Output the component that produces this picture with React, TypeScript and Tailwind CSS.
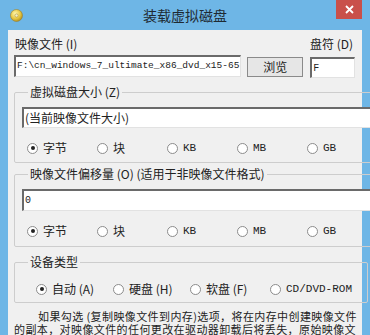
import React from "react";

const cjk = { fontFamily: '"Noto Sans CJK SC", "Noto Sans", sans-serif' };
const mono = { fontFamily: '"Liberation Mono", "DejaVu Sans Mono", monospace' };

function Radio({ checked, label, isMono }: { checked?: boolean; label: string; isMono?: boolean }) {
  return (
    <div className="flex items-center h-[14px]">
      <span className="w-[11px] h-[11px] rounded-full border border-[#8c8c8c] bg-white flex items-center justify-center shrink-0">
        {checked && <span className="w-[4px] h-[4px] rounded-full bg-[#222]" />}
      </span>
      <span
        className={"ml-[5px] whitespace-nowrap text-[#222] " + (isMono ? "text-[11px]" : "text-[12px]")}
        style={isMono ? mono : cjk}
      >
        {label}
      </span>
    </div>
  );
}

function UnitRow() {
  return (
    <div className="grid grid-cols-[70px_70px_70px_70px_70px] pl-[5px]">
      <Radio checked label="字节" />
      <Radio label="块" />
      <Radio label="KB" isMono />
      <Radio label="MB" isMono />
      <Radio label="GB" isMono />
    </div>
  );
}

function Input({ children, className }: { children?: React.ReactNode; className?: string }) {
  return (
    <div
      className={
        "bg-white border-t-2 border-l-2 border-t-[#6a6a6a] border-l-[#6a6a6a] border-b border-r border-b-[#e2e2e2] border-r-[#e2e2e2] flex items-center pl-[1px] overflow-hidden whitespace-nowrap text-[#222] " +
        (className ?? "")
      }
    >
      {children}
    </div>
  );
}

export default function App() {
  return (
    <div className="w-[370px] h-[335px] bg-[#6eb6e6] flex flex-col overflow-hidden" style={cjk}>
      {/* Title bar */}
      <div className="h-[30px] flex shrink-0">
        <div className="w-[40px] pl-[10px] pt-[9px]">
          <svg width="13" height="13" viewBox="0 0 13 13">
            <defs>
              <radialGradient id="g" cx="40%" cy="35%" r="70%">
                <stop offset="0%" stopColor="#fff8b0" />
                <stop offset="60%" stopColor="#e6c640" />
                <stop offset="100%" stopColor="#a88a20" />
              </radialGradient>
            </defs>
            <circle cx="6.5" cy="6.5" r="6" fill="url(#g)" stroke="#9a8030" strokeWidth="0.6" />
            <circle cx="6.5" cy="6.5" r="1.6" fill="#f4efc8" stroke="#a08830" strokeWidth="0.5" />
          </svg>
        </div>
        <div className="flex-1 flex items-center justify-center text-[14px] text-[#1e2a33]">装载虚拟磁盘</div>
        <div className="w-[40px] flex justify-end pr-[8px]">
          <div className="w-[26px] h-[19px] bg-[#c9504a] flex items-center justify-center">
            <svg width="9" height="9" viewBox="0 0 9 9">
              <path d="M1 1 L8 8 M8 1 L1 8" stroke="#fff" strokeWidth="1.8" />
            </svg>
          </div>
        </div>
      </div>

      {/* Body */}
      <div className="flex-1 mx-[8px] bg-[#f0f0f0] pl-[6px] pr-[7px] pt-[7px] text-[12px] text-[#222]">
        <div className="flex h-[14px] items-center leading-[14px]">
          <span className="flex-1 pl-[1px]">映像文件 (I)</span>
          <span className="w-[45px]">盘符 (D)</span>
        </div>
        <div className="flex mt-[4px] items-start">
          <Input className="w-[228px] h-[22px] text-[9.5px]">
            <span style={mono}>F:\cn_windows_7_ultimate_x86_dvd_x15-65</span>
          </Input>
          <div className="ml-[6px] mt-[2px] w-[56px] h-[20px] bg-[#e6e6e6] border border-[#8a8a8a] flex items-center justify-center text-[12px]">
            浏览
          </div>
          <Input className="ml-[7px] mt-[2px] w-[45px] h-[21px] text-[10px]">
            <span style={mono}>F</span>
          </Input>
        </div>

        {/* Group 1 */}
        <fieldset className="mt-[7px] border border-[#cdcdcd] rounded-[2px] px-[7px] pb-[7px]">
          <legend className="ml-[6px] px-[2px] leading-[14px] text-[12px]">虚拟磁盘大小 (Z)</legend>
          <Input className="mt-[8px] h-[21px] text-[12px]">(当前映像文件大小)</Input>
          <div className="mt-[13px]">
            <UnitRow />
          </div>
        </fieldset>

        {/* Group 2 */}
        <fieldset className="mt-[4px] border border-[#cdcdcd] rounded-[2px] px-[7px] pb-[8px]">
          <legend className="ml-[6px] px-[2px] leading-[14px] text-[12px]">映像文件偏移量 (O) (适用于非映像文件格式)</legend>
          <Input className="mt-[8px] h-[22px] text-[10px]">
            <span style={mono}>0</span>
          </Input>
          <div className="mt-[13px]">
            <UnitRow />
          </div>
        </fieldset>

        {/* Group 3 */}
        <fieldset className="mt-[8px] border border-[#cdcdcd] rounded-[2px] px-[7px] pb-[6px]">
          <legend className="ml-[6px] px-[2px] leading-[14px] text-[12px]">设备类型</legend>
          <div className="mt-[13px] grid grid-cols-[77px_77px_80px_90px] pl-[14px]">
            <Radio checked label="自动 (A)" />
            <Radio label="硬盘 (H)" />
            <Radio label="软盘 (F)" />
            <Radio label="CD/DVD-ROM" isMono />
          </div>
        </fieldset>

        <div className="mt-[7px] -mr-[7px] text-[11px] tracking-[0.4px] whitespace-nowrap text-[#222]">
          <div className="pl-[24px] h-[13px] leading-[13px]">如果勾选 (复制映像文件到内存)选项，将在内存中创建映像文件</div>
          <div className="h-[13px] leading-[13px]">的副本，对映像文件的任何更改在驱动器卸载后将丢失，原始映像文</div>
        </div>
      </div>
    </div>
  );
}
